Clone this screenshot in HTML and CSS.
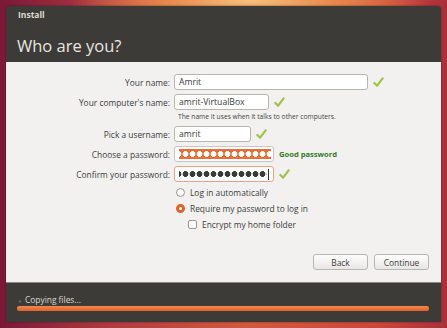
FILE: index.html
```html
<!DOCTYPE html>
<html>
<head>
    <title>Install</title>
    <link rel="stylesheet" href="styles.css">
</head>
<body>
    <div class="window">
        <div class="header">
            <div class="title">Install</div>
            <h1>Who are you?</h1>
        </div>
        <div class="content">
            <div class="row">
                <label class="label">Your name:</label>
                <div class="entry entry-name">Amrit</div>
                <svg class="tick" viewBox="0 0 12 12"><path d="M1.5 6.5 L4.5 9.5 L10.5 1.5" fill="none" stroke="#9cc446" stroke-width="2.4" stroke-linecap="round" stroke-linejoin="round"/></svg>
            </div>
            <div class="row">
                <label class="label">Your computer's name:</label>
                <div class="entry entry-host">amrit-VirtualBox</div>
                <svg class="tick" viewBox="0 0 12 12"><path d="M1.5 6.5 L4.5 9.5 L10.5 1.5" fill="none" stroke="#9cc446" stroke-width="2.4" stroke-linecap="round" stroke-linejoin="round"/></svg>
            </div>
            <div class="hint">The name it uses when it talks to other computers.</div>
            <div class="row">
                <label class="label">Pick a username:</label>
                <div class="entry entry-user">amrit</div>
                <svg class="tick" viewBox="0 0 12 12"><path d="M1.5 6.5 L4.5 9.5 L10.5 1.5" fill="none" stroke="#9cc446" stroke-width="2.4" stroke-linecap="round" stroke-linejoin="round"/></svg>
            </div>
            <div class="row">
                <label class="label">Choose a password:</label>
                <div class="entry entry-pass selected"><span class="dots light"></span></div>
                <span class="strength">Good password</span>
            </div>
            <div class="row">
                <label class="label">Confirm your password:</label>
                <div class="entry entry-pass focused"><span class="dots dark"></span><span class="caret"></span></div>
                <svg class="tick" viewBox="0 0 12 12"><path d="M1.5 6.5 L4.5 9.5 L10.5 1.5" fill="none" stroke="#9cc446" stroke-width="2.4" stroke-linecap="round" stroke-linejoin="round"/></svg>
            </div>
            <div class="options">
                <div class="option"><span class="radio"></span>Log in automatically</div>
                <div class="option"><span class="radio checked"></span>Require my password to log in</div>
                <div class="option sub"><span class="check"></span>Encrypt my home folder</div>
            </div>
            <div class="buttons">
                <button class="btn">Back</button>
                <button class="btn">Continue</button>
            </div>
        </div>
        <div class="footer">
            <div class="status"><span class="arrow">▸</span>Copying files...</div>
            <div class="progress"></div>
        </div>
    </div>
</body>
</html>
```
FILE: styles.css
```css
body {
    margin: 0;
    width: 447px;
    height: 328px;
    overflow: hidden;
    font-family: "Open Sans", "DejaVu Sans", sans-serif;
    background:
        radial-gradient(ellipse 180px 40px at 250px 0px, #f6c27e 0%, #e98a4e 45%, rgba(222, 96, 60, 0) 100%),
        linear-gradient(to right, #7a1838 0%, #b03a40 25%, #d25a3e 55%, #c8463a 85%, #a9303a 100%);
}

.window {
    margin: 6px 6px 0 6px;
    width: 435px;
    height: 316px;
    display: flex;
    flex-direction: column;
    border-radius: 4px 4px 0 0;
    overflow: hidden;
    box-shadow: 0 0 2px rgba(40, 10, 20, 0.6);
}

.header {
    background: #3c3b37;
    height: 56px;
    padding: 0 11px;
    box-sizing: border-box;
}

.title {
    color: #dfdbd2;
    font-size: 8.5px;
    font-weight: bold;
    padding-top: 3px;
    padding-left: 1px;
}

h1 {
    margin: 14px 0 0 0;
    font-size: 16.5px;
    font-weight: normal;
    color: #e8e6e1;
}

.content {
    background: #f2f1f0;
    height: 220px;
    box-sizing: border-box;
    padding-top: 12px;
    font-size: 8.4px;
    color: #3c3c3c;
    position: relative;
}

.row {
    display: flex;
    align-items: center;
    height: 16px;
    margin-bottom: 4px;
}

.label {
    width: 168px;
    text-align: right;
    padding-right: 4px;
    box-sizing: border-box;
}

.entry {
    height: 16px;
    box-sizing: border-box;
    background: #ffffff;
    border: 1px solid #b8b5b0;
    border-radius: 3px;
    padding-left: 4px;
    line-height: 14px;
    font-size: 8.6px;
    color: #3a3a3a;
    overflow: hidden;
    white-space: nowrap;
}

.entry-name { width: 194px; }
.entry-host { width: 95px; }
.entry-user { width: 77px; }
.entry-pass { width: 100px; }

.entry.selected {
    border-color: #c9c6c1;
    padding: 2px 2px 2px 4px;
}

.entry.focused {
    border-color: #f0a07c;
    display: flex;
    align-items: center;
    padding-left: 4px;
}

.dots {
    display: block;
    height: 10px;
    background-size: 7px 10px;
    background-position: -4px 0;
}

.dots.light {
    background-color: #ee6c34;
    background-image: radial-gradient(circle, #ffffff 2.6px, rgba(255, 255, 255, 0) 3.2px);
}

.dots.dark {
    width: 88px;
    background-image: radial-gradient(circle, #3a3a3a 2.6px, rgba(58, 58, 58, 0) 3.2px);
}

.caret {
    width: 1px;
    height: 11px;
    background: #333333;
    margin-left: 1px;
}

.tick {
    width: 11px;
    height: 11px;
    margin-left: 5px;
}

.strength {
    color: #2f7d1c;
    font-weight: bold;
    font-size: 7.6px;
    margin-left: 5px;
}

.hint {
    font-size: 6.7px;
    margin: -2px 0 5px 172px;
    height: 9px;
    color: #444444;
}

.options {
    margin-left: 170px;
    margin-top: 2px;
}

.option {
    display: flex;
    align-items: center;
    height: 12px;
    margin-bottom: 4px;
    font-size: 8.4px;
}

.radio {
    width: 9px;
    height: 9px;
    box-sizing: border-box;
    border: 1px solid #9a9792;
    border-radius: 50%;
    background: #fbfbfa;
    margin-right: 5px;
}

.radio.checked {
    border: 3px solid #e0622c;
    background: #fff;
}

.option.sub {
    margin-left: 12px;
}

.check {
    width: 9px;
    height: 9px;
    box-sizing: border-box;
    border: 1px solid #9a9792;
    border-radius: 2px;
    background: #fbfbfa;
    margin-right: 5px;
}

.buttons {
    position: absolute;
    right: 12px;
    top: 192px;
    display: flex;
    gap: 6px;
}

.btn {
    font-family: "Open Sans", "DejaVu Sans", sans-serif;
    font-size: 8.4px;
    color: #3c3c3c;
    height: 16px;
    padding: 0;
    border: 1px solid #b9b6b0;
    border-radius: 3px;
    background: linear-gradient(to bottom, #fdfdfc, #e9e7e4);
    width: 55px;
}

.footer {
    background: #3c3b37;
    flex: 1;
    padding: 11px 12px 0 11px;
    box-sizing: border-box;
    border-top: 1px solid #8b8780;
}

.status {
    color: #dcd9d2;
    font-size: 8.4px;
    height: 11px;
    line-height: 11px;
    padding-left: 2px;
}

.arrow {
    color: #6a6862;
    font-size: 6px;
    margin-right: 3px;
}

.progress {
    margin-top: 1px;
    height: 5px;
    border-radius: 2px;
    background: linear-gradient(to bottom, #f08a50, #e2602a);
}
```
